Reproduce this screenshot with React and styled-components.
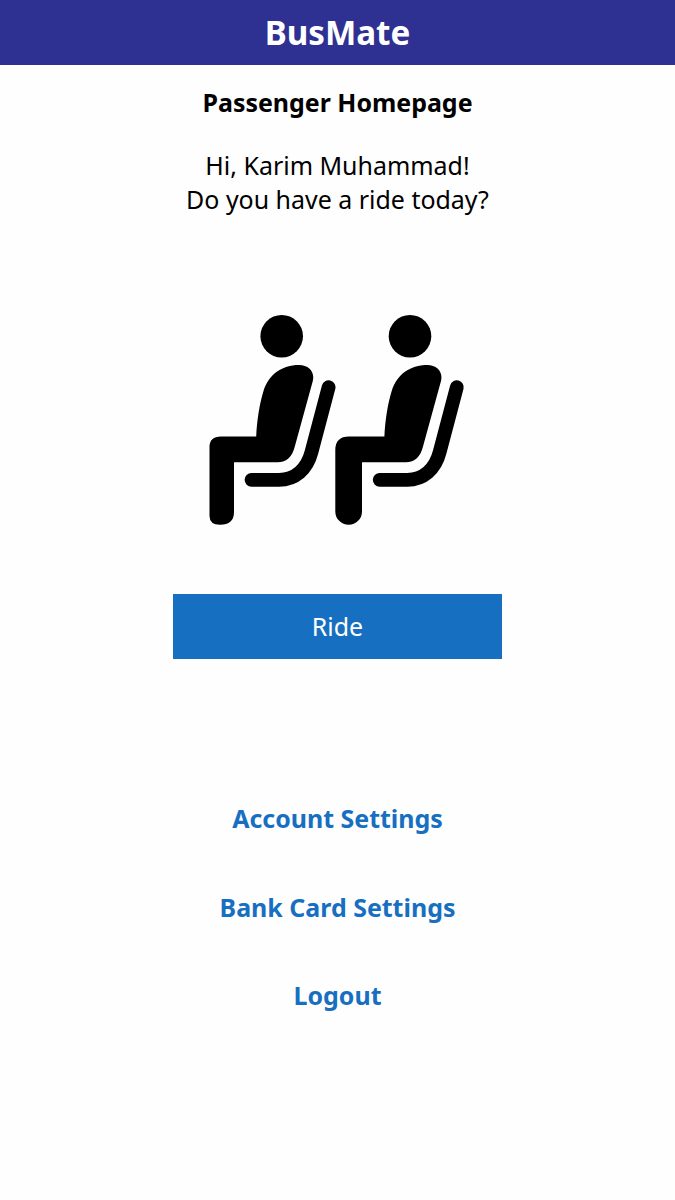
import React from 'react';
import styled, { createGlobalStyle } from 'styled-components';

const GlobalStyle = createGlobalStyle`
  * { box-sizing: border-box; }
  body {
    margin: 0;
    background: #fefefe;
    color: #000;
    font: 400 24.96px/34px 'Noto Sans', sans-serif;
  }
`;

const Page = styled.div`
  display: flex;
  flex-direction: column;
  min-height: 1200px;
`;

const Header = styled.header`
  display: flex;
  align-items: center;
  justify-content: center;
  height: 65px;
  background: #2e3092;
  color: #fff;
`;

const Brand = styled.h1`
  margin: 0;
  font-size: 33.2px;
  font-weight: 700;
  line-height: 45px;
`;

const Main = styled.main`
  display: flex;
  flex-direction: column;
  align-items: center;
  padding-top: 20px;
  text-align: center;
`;

const Title = styled.h2`
  margin: 0;
  font-size: 24.95px;
  font-weight: 700;
`;

const Greeting = styled.p`
  margin: 29px 0 0;
`;

const Illustration = styled.svg`
  display: block;
  width: 275px;
  height: 230px;
  margin-top: 89px;
`;

const RideButton = styled.button`
  width: 329px;
  height: 65px;
  margin-top: 59px;
  padding: 0 0 1px;
  border: 0;
  background: #176fc1;
  color: #fff;
  font: inherit;
`;

const Links = styled.nav`
  display: flex;
  flex-direction: column;
  align-items: center;
  gap: 54.5px;
  margin-top: 142px;
`;

const NavLink = styled.a`
  color: #176fc1;
  font-weight: 700;
  text-decoration: none;
`;

const Seat = () => (
  <path
    d="M328.6 387.2L311.5 452C307 469.5 295 479.8 279 479.8H251.5"
    fill="none"
    stroke="#000"
    strokeWidth="13.8"
    strokeLinecap="round"
  />
);

export default function App() {
  return (
    <Page>
      <GlobalStyle />
      <Header>
        <Brand>BusMate</Brand>
      </Header>
      <Main>
        <Title>Passenger Homepage</Title>
        <Greeting>
          Hi, Karim Muhammad!
          <br />
          Do you have a ride today?
        </Greeting>
        <Illustration viewBox="200 305 275 230" role="img" aria-label="Two seated passengers">
          <circle cx="281.7" cy="336.2" r="21.3" />
          <path d="M299 365C309 365 315 372 312.8 381L294.8 446.5C292 457 287 462.3 277.5 462.3H234V512Q234 524.7 220 524.7Q209.5 524.7 209.5 516V447Q209.5 436.5 221 436.5H256.2C257 420 259.5 404 263.5 391C268.5 374.5 282 365 299 365Z" />
          <Seat />
          <circle cx="410" cy="336.2" r="21.3" />
          <path d="M427.2 365C437.2 365 443.2 372 441 381L423 446.5C420.2 457 415.2 462.3 405.7 462.3H362V511.4A13.35 13.35 0 0 1 335.3 511.4V450Q335.3 436.5 349 436.5H384.4C385.2 420 387.7 404 391.7 391C396.7 374.5 410.2 365 427.2 365Z" />
          <g transform="translate(128.2 0)">
            <Seat />
          </g>
        </Illustration>
        <RideButton type="button">Ride</RideButton>
        <Links>
          <NavLink href="#account">Account Settings</NavLink>
          <NavLink href="#bank-card">Bank Card Settings</NavLink>
          <NavLink href="#logout">Logout</NavLink>
        </Links>
      </Main>
    </Page>
  );
}
